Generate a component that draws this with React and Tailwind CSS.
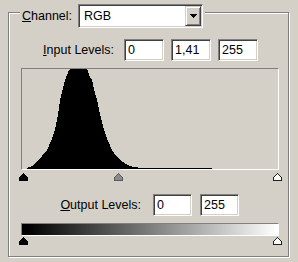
import React from "react";

function Thumb({ color }) {
  const fill = color === "black" ? "#000000" : color === "gray" ? "#8a8a8a" : "#ffffff";
  const stroke = color === "black" ? "#000000" : color === "gray" ? "#5a5a5a" : "#202020";
  return (
    <svg width="9" height="8" viewBox="0 0 9 8" shapeRendering="crispEdges">
      <path d="M4.5 0.5 L8.5 4.5 L8.5 7.5 L0.5 7.5 L0.5 4.5 Z" fill={fill} stroke={stroke} strokeWidth="1" />
    </svg>
  );
}

function ThumbRow({ thumbs }) {
  return (
    <div className="relative ml-[12px] h-[8px] w-[258px]">
      {thumbs.map((t, i) => (
        <div key={i} className="absolute top-0" style={{ left: t.left }}>
          <Thumb color={t.color} />
        </div>
      ))}
    </div>
  );
}

function Field({ value, w }) {
  return (
    <div
      className={`${w} h-[22px] bg-white border border-t-[#808080] border-l-[#808080] border-b-white border-r-white shadow-[inset_1px_1px_0_#404040,inset_-1px_-1px_0_#d4d0c8] flex items-center pl-[3px] text-black`}
    >
      {value}
    </div>
  );
}

export default function App() {
  const hist =
    "4,100 5,99 10,97 16,91 20,87 25,81 29,72 33,61 36,46 38,31 41,19 43,11 45,6 47,1 48,0 65,0 66,2 67,6 70,11 72,20 75,31 78,45 82,61 86,72 90,81 94,87 98,91 104,95 111,98 120,99 190,99 190,100";
  return (
    <div className="w-[298px] h-[262px] bg-[#d4d0c8] pl-[8px] pt-[12px] font-['Liberation_Sans'] text-[12.5px] text-black leading-none">
      <div className="w-[281px] h-[245px] border border-[#808080] shadow-[inset_1px_1px_0_#ffffff,1px_1px_0_#ffffff] flex flex-col">
        {/* legend */}
        <div className="-mt-[9px] ml-[11px] self-start h-[24px] bg-[#d4d0c8] px-[2px] flex items-center">
          <span className="mr-[6px]">
            <span className="underline">C</span>hannel:
          </span>
          <div className="w-[125px] h-[24px] bg-white border border-t-[#808080] border-l-[#808080] border-b-white border-r-white shadow-[inset_1px_1px_0_#404040,inset_-1px_-1px_0_#d4d0c8] p-[1px] flex">
            <div className="flex-1 flex items-center pl-[4px]">RGB</div>
            <div className="w-[16px] h-[20px] bg-[#d4d0c8] border border-t-[#d4d0c8] border-l-[#d4d0c8] border-b-[#404040] border-r-[#404040] shadow-[inset_1px_1px_0_#ffffff,inset_-1px_-1px_0_#808080] flex items-center justify-center">
              <svg width="7" height="4" viewBox="0 0 7 4" shapeRendering="crispEdges">
                <polygon points="0,0 7,0 3.5,4" fill="#000" />
              </svg>
            </div>
          </div>
        </div>

        {/* input levels */}
        <div className="mt-[11px] flex items-center justify-end pr-[30px] gap-[7px]">
          <span className="mr-[3px]">
            <span className="underline">I</span>nput Levels:
          </span>
          <Field value="0" w="w-[40px]" />
          <Field value="1,41" w="w-[40px]" />
          <Field value="255" w="w-[40px]" />
        </div>

        {/* histogram */}
        <div className="mt-[7px] ml-[12px] w-[258px] h-[102px] border border-t-[#808080] border-l-[#808080] border-b-white border-r-white">
          <svg width="256" height="100" viewBox="0 0 256 100" shapeRendering="crispEdges" className="block">
            <polygon points={hist} fill="#000" />
          </svg>
        </div>

        <div className="mt-[3px]">
          <ThumbRow
            thumbs={[
              { color: "black", left: -2 },
              { color: "gray", left: 93 },
              { color: "white", left: 252 },
            ]}
          />
        </div>

        {/* output levels */}
        <div className="mt-[13px] flex items-center justify-end pr-[49px] gap-[8px]">
          <span className="mr-[4px]">
            <span className="underline">O</span>utput Levels:
          </span>
          <Field value="0" w="w-[39px]" />
          <Field value="255" w="w-[39px]" />
        </div>

        {/* gradient */}
        <div className="mt-[7px] ml-[12px] w-[258px] h-[13px] border border-t-[#808080] border-l-[#808080] border-b-white border-r-white bg-[linear-gradient(to_right,#000000_2%,#ffffff_100%)]" />

        <div className="mt-[1px]">
          <ThumbRow
            thumbs={[
              { color: "black", left: -2 },
              { color: "white", left: 252 },
            ]}
          />
        </div>
      </div>
    </div>
  );
}
